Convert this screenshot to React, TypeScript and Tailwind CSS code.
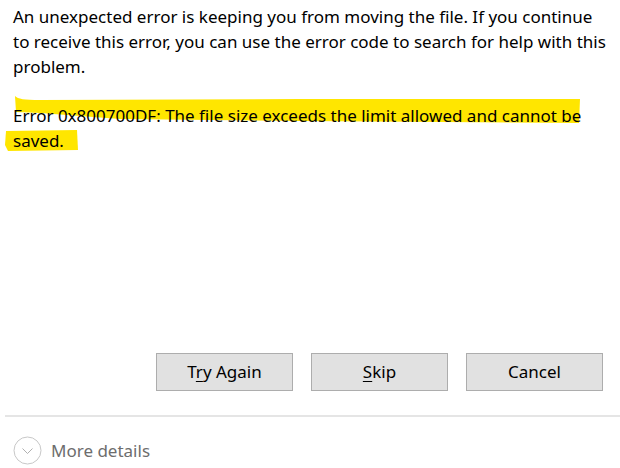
import React from "react";

export default function App() {
  const font = { fontFamily: '"Segoe UI", "Noto Sans", "Open Sans", sans-serif' };
  return (
    <div className="relative w-[620px] h-[468px] bg-white overflow-hidden text-black" style={font}>
      <svg className="absolute left-0 top-0" width="620" height="468" viewBox="0 0 620 468">
        <path
          d="M15 96 C18 99 24 100 40 100 L300 99 L580 99 L579 123 L300 121 L120 119 L40 113 L16 112 Z"
          fill="#ffe600"
        />
        <path d="M6 131 L77 130 L78 150 L8 151 L5 145 Z" fill="#ffe600" />
      </svg>
      <div className="relative flex flex-col h-full">
        <div className="pl-[13px] pt-[4px] text-[17px] leading-[25px] whitespace-nowrap">
          <p>An unexpected error is keeping you from moving the file. If you continue</p>
          <p>to receive this error, you can use the error code to search for help with this</p>
          <p>problem.</p>
          <p className="mt-[24px]">Error 0x800700DF: The file size exceeds the limit allowed and cannot be</p>
          <p>saved.</p>
        </div>
        <div className="flex-1" />
        <div className="flex justify-end gap-[18px] pr-[17px]">
          <button className="w-[137px] h-[38px] bg-[#e1e1e1] border border-[#adadad] text-[17px]">
            T<span className="underline underline-offset-[3px]">r</span>y Again
          </button>
          <button className="w-[137px] h-[38px] bg-[#e1e1e1] border border-[#adadad] text-[17px]">
            <span className="underline underline-offset-[3px]">S</span>kip
          </button>
          <button className="w-[137px] h-[38px] bg-[#e1e1e1] border border-[#adadad] text-[17px]">
            Cancel
          </button>
        </div>
        <div className="mt-[24px] ml-[5px] h-[2px] bg-[#e5e5e5]" />
        <div className="flex items-center gap-[9px] pl-[13px] pt-[19px] pb-[3px]">
          <svg width="29" height="29" viewBox="0 0 29 29">
            <circle cx="14.5" cy="14.5" r="13.5" fill="none" stroke="#c8c8c8" strokeWidth="1" />
            <path d="M9.5 12.5 L14.5 17.5 L19.5 12.5" fill="none" stroke="#b0b0b0" strokeWidth="1" />
          </svg>
          <span className="text-[17px] text-[#6d6d6d]">More details</span>
        </div>
      </div>
    </div>
  );
}
